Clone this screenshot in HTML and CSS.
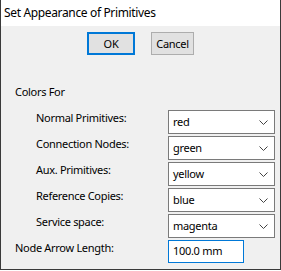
FILE: index.html
```html
<!DOCTYPE html>
<html>
<head>
<meta charset="utf-8">
<link rel="stylesheet" href="styles.css">
</head>
<body>
<div class="window">
  <div class="titlebar">Set Appearance of Primitives</div>
  <div class="content">
    <div class="buttons">
      <div class="btn btn-default">OK</div>
      <div class="btn">Cancel</div>
    </div>
    <div class="section-title">Colors For</div>
    <div class="rows">
      <div class="row indent">
        <div class="label">Normal Primitives:</div>
        <div class="combo"><span>red</span><svg class="chev" width="9" height="5" viewBox="0 0 9 5"><path d="M0.5 0.5 L4.5 4.5 L8.5 0.5" fill="none" stroke="#444" stroke-width="1"/></svg></div>
      </div>
      <div class="row indent">
        <div class="label">Connection Nodes:</div>
        <div class="combo"><span>green</span><svg class="chev" width="9" height="5" viewBox="0 0 9 5"><path d="M0.5 0.5 L4.5 4.5 L8.5 0.5" fill="none" stroke="#444" stroke-width="1"/></svg></div>
      </div>
      <div class="row indent">
        <div class="label">Aux. Primitives:</div>
        <div class="combo"><span>yellow</span><svg class="chev" width="9" height="5" viewBox="0 0 9 5"><path d="M0.5 0.5 L4.5 4.5 L8.5 0.5" fill="none" stroke="#444" stroke-width="1"/></svg></div>
      </div>
      <div class="row indent">
        <div class="label">Reference Copies:</div>
        <div class="combo"><span>blue</span><svg class="chev" width="9" height="5" viewBox="0 0 9 5"><path d="M0.5 0.5 L4.5 4.5 L8.5 0.5" fill="none" stroke="#444" stroke-width="1"/></svg></div>
      </div>
      <div class="row indent">
        <div class="label">Service space:</div>
        <div class="combo"><span>magenta</span><svg class="chev" width="9" height="5" viewBox="0 0 9 5"><path d="M0.5 0.5 L4.5 4.5 L8.5 0.5" fill="none" stroke="#444" stroke-width="1"/></svg></div>
      </div>
      <div class="row">
        <div class="label label-wide">Node Arrow Length:</div>
        <div class="textbox">100.0 mm</div>
      </div>
    </div>
  </div>
</div>
</body>
</html>
```

FILE: styles.css
```css
html, body {
  margin: 0;
  padding: 0;
  background: #ffffff;
}
body {
  font-family: "Noto Sans", "Open Sans", sans-serif;
  font-size: 11px;
  letter-spacing: -0.3px;
  color: #000;
}
.window {
  width: 281px;
  height: 270px;
  box-sizing: border-box;
  border-left: 1px solid #3a3a3a;
  border-right: 1px solid #3a3a3a;
  border-bottom: 1px solid #3a3a3a;
  background: #f0f0f0;
  display: flex;
  flex-direction: column;
}
.titlebar {
  height: 26px;
  line-height: 26px;
  background: #ffffff;
  padding-left: 3px;
  font-size: 12px;
  letter-spacing: -0.35px;
  white-space: nowrap;
}
.content {
  flex: 1;
  padding-left: 14px;
}
.buttons {
  display: flex;
  justify-content: center;
  gap: 16px;
  margin-top: 6px;
  padding-right: 14px;
}
.btn {
  height: 23px;
  box-sizing: border-box;
  border: 1px solid #adadad;
  background: #e1e1e1;
  line-height: 21px;
  text-align: center;
  width: 43px;
}
.btn-default {
  width: 48px;
  border: 2px solid #0078d7;
  line-height: 19px;
}
.section-title {
  margin-top: 29px;
  line-height: 16px;
}
.rows {
  margin-top: 10px;
  display: flex;
  flex-direction: column;
  gap: 2px;
}
.row {
  display: flex;
  align-items: flex-start;
}
.indent {
  padding-left: 21px;
}
.label {
  width: 132px;
  line-height: 16px;
  white-space: nowrap;
}
.label-wide {
  width: 153px;
}
.combo {
  width: 107px;
  height: 24px;
  box-sizing: border-box;
  border: 1px solid #7a7a7a;
  background: #ffffff;
  display: flex;
  align-items: center;
  justify-content: space-between;
  padding-left: 4px;
  padding-right: 6px;
  padding-bottom: 1px;
}
.combo span {
  line-height: 16px;
}
.chev {
  display: block;
  margin-top: 1px;
}
.textbox {
  width: 76px;
  height: 23px;
  box-sizing: border-box;
  border: 1px solid #0078d7;
  background: #ffffff;
  padding-left: 4px;
  line-height: 19px;
}
```
